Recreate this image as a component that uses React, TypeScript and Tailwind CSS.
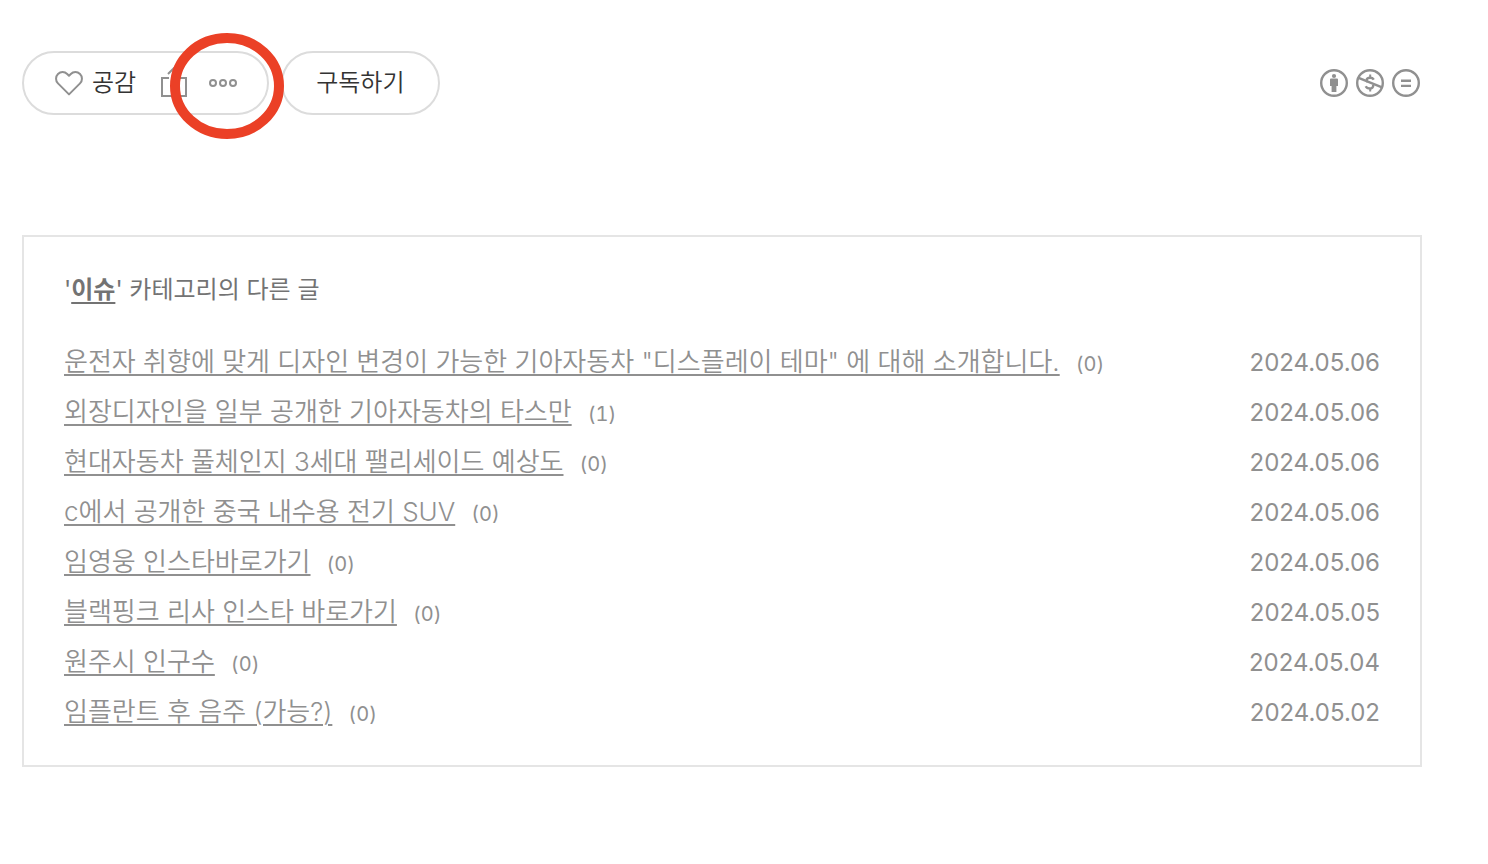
import React from 'react'

const posts = [
  { title: '운전자 취향에 맞게 디자인 변경이 가능한 기아자동차 "디스플레이 테마" 에 대해 소개합니다.', comments: 0, date: '2024.05.06' },
  { title: '외장디자인을 일부 공개한 기아자동차의 타스만', comments: 1, date: '2024.05.06' },
  { title: '현대자동차 풀체인지 3세대 팰리세이드 예상도', comments: 0, date: '2024.05.06' },
  { title: 'c에서 공개한 중국 내수용 전기 SUV', comments: 0, date: '2024.05.06' },
  { title: '임영웅 인스타바로가기', comments: 0, date: '2024.05.06' },
  { title: '블랙핑크 리사 인스타 바로가기', comments: 0, date: '2024.05.05' },
  { title: '원주시 인구수', comments: 0, date: '2024.05.04' },
  { title: '임플란트 후 음주 (가능?)', comments: 0, date: '2024.05.02' },
]

const HeartIcon = () => (
  <svg width="28" height="26" viewBox="0 0 28 26" fill="none" stroke="#909090" strokeWidth="2" strokeLinejoin="round">
    <path d="M14 24.4 3 13.4C0.4 10.8 0.4 6.6 3 4C5.6 1.4 9.6 1.4 12.2 4L14 5.8L15.8 4C18.4 1.4 22.4 1.4 25 4C27.6 6.6 27.6 10.8 25 13.4Z" />
  </svg>
)

const ShareIcon = () => (
  <svg width="26" height="32" viewBox="0 0 26 32" fill="none" stroke="#909090" strokeWidth="2">
    <path d="M8 11H1V29H25V11H18M13 21V2M7 7 13 1 19 7" />
  </svg>
)

const MoreIcon = () => (
  <svg width="28" height="8" viewBox="0 0 28 8" fill="none" stroke="#909090" strokeWidth="2">
    <circle cx="4" cy="4" r="3" />
    <circle cx="14" cy="4" r="3" />
    <circle cx="24" cy="4" r="3" />
  </svg>
)

const LicenseIcons = () => (
  <>
    <svg width="28" height="28" viewBox="0 0 28 28" fill="none" stroke="#909090" strokeWidth="2.4">
      <circle cx="14" cy="14" r="12.8" />
      <circle cx="14" cy="7" r="2.1" fill="#909090" stroke="none" />
      <path d="M11 9.6H17Q18 9.6 18 10.6V17H16.4V23H11.6V17H10V10.6Q10 9.6 11 9.6Z" fill="#909090" stroke="none" />
    </svg>
    <svg width="28" height="28" viewBox="0 0 28 28" fill="none" stroke="#909090" strokeWidth="2.4">
      <circle cx="14" cy="14" r="12.8" />
      <path d="M2 8.6 26 18.4" />
      <path d="M17.8 10.6C17 9.3 15.8 8.7 14.2 8.7C12.1 8.7 10.7 9.6 10.7 11.2C10.7 12 11 12.5 11.7 12.9M17.2 16C17.4 18.2 16 19.4 13.9 19.4C12 19.4 10.5 18.7 9.7 17.2" />
      <path d="M14.2 5.6V9M14.2 19V22.6" strokeWidth="2" />
    </svg>
    <svg width="28" height="28" viewBox="0 0 28 28" fill="none" stroke="#909090" strokeWidth="2.4">
      <circle cx="14" cy="14" r="12.8" />
      <path d="M9 11.7H19M9 16.9H19" />
    </svg>
  </>
)

const App = () => {
  return (
    <main className="w-full bg-white pt-[51px] pb-24 pl-[22px] pr-[66px] font-['Inter','Noto_Sans_CJK_KR',sans-serif]">
      {/* Reactions + subscribe */}
      <div className="flex items-center justify-between">
        <div className="flex items-center gap-3">
          <div className="flex h-16 items-center rounded-full border-2 border-[#dcdcdc] pr-[30px] pl-[31px]">
            <button type="button" className="flex items-center gap-[9px] text-2xl font-[350] text-[#333]">
              <HeartIcon />
              공감
            </button>
            <button type="button" aria-label="공유하기" className="ml-[25px]">
              <ShareIcon />
            </button>
            <button type="button" aria-label="더보기" className="relative ml-[22px] flex h-8 items-center">
              <MoreIcon />
              <svg className="pointer-events-none absolute -top-[34px] -left-[39px] max-w-none" width="114" height="106" viewBox="0 0 114 106" fill="none">
                <ellipse cx="57" cy="53" rx="52" ry="48" stroke="#eb4026" strokeWidth="10" />
              </svg>
            </button>
          </div>
          <button type="button" className="h-16 rounded-full border-2 border-[#dcdcdc] px-[33px] text-2xl font-[350] text-[#333]">
            구독하기
          </button>
        </div>
        <a href="#license" aria-label="저작자표시-비영리-변경금지" className="mr-0.5 flex gap-2">
          <LicenseIcons />
        </a>
      </div>

      {/* Other posts in the category */}
      <section className="mt-[120px] border-2 border-[#e5e5e5] px-10 pt-[33px] pb-7">
        <h4 className="text-2xl leading-10 text-[#737373]">
          '<a href="#issue" className="font-bold underline decoration-2 underline-offset-4">이슈</a>' 카테고리의 다른 글
        </h4>
        <table className="mt-[27px] w-full text-left text-[#909090]">
          <tbody>
            {posts.map((post) => (
              <tr key={post.title} className="h-[50px]">
                <td className="p-0 text-[26px] leading-10">
                  <a href="#post" className="font-[350] underline decoration-2 underline-offset-3">{post.title}</a>
                  <span className="ml-4 text-xl tabular-nums">({post.comments})</span>
                </td>
                <td className="p-0 pt-0.5 text-right text-2xl leading-10">{post.date}</td>
              </tr>
            ))}
          </tbody>
        </table>
      </section>
    </main>
  )
}

export default App
